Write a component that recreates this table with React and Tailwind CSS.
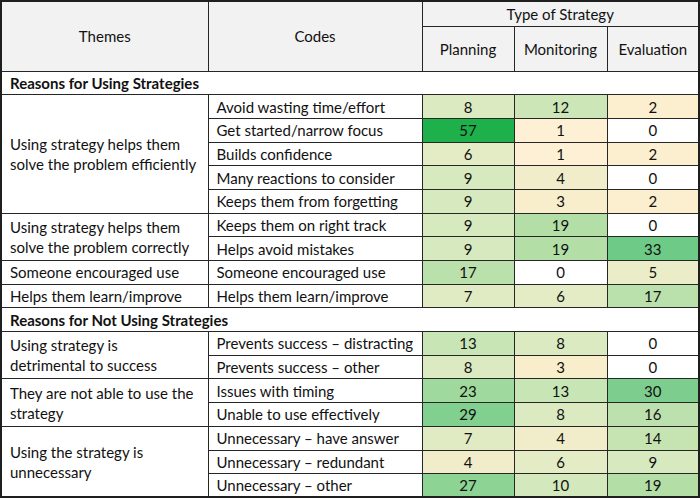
import React from 'react';

const stops = [
  [1, [253, 240, 212]],
  [3, [248, 238, 204]],
  [6, [228, 236, 198]],
  [10, [211, 232, 188]],
  [20, [175, 221, 164]],
  [33, [110, 202, 135]],
  [57, [30, 176, 75]],
];

const heat = (v) => {
  if (v === 0) return '#ffffff';
  for (let i = 0; i < stops.length - 1; i++) {
    const [a, ca] = stops[i];
    const [b, cb] = stops[i + 1];
    if (v >= a && v <= b) {
      const t = (v - a) / (b - a);
      const c = ca.map((x, k) => Math.round(x + (cb[k] - x) * t));
      return `rgb(${c.join(',')})`;
    }
  }
  return '#ffffff';
};

const rows = [
  { section: 'Reasons for Using Strategies' },
  { theme: ['Using strategy helps them', 'solve the problem efficiently'], span: 5, code: 'Avoid wasting time/effort', v: [8, 12, 2] },
  { code: 'Get started/narrow focus', v: [57, 1, 0] },
  { code: 'Builds confidence', v: [6, 1, 2] },
  { code: 'Many reactions to consider', v: [9, 4, 0] },
  { code: 'Keeps them from forgetting', v: [9, 3, 2] },
  { theme: ['Using strategy helps them', 'solve the problem correctly'], span: 2, code: 'Keeps them on right track', v: [9, 19, 0] },
  { code: 'Helps avoid mistakes', v: [9, 19, 33] },
  { theme: ['Someone encouraged use'], span: 1, code: 'Someone encouraged use', v: [17, 0, 5] },
  { theme: ['Helps them learn/improve'], span: 1, code: 'Helps them learn/improve', v: [7, 6, 17] },
  { section: 'Reasons for Not Using Strategies' },
  { theme: ['Using strategy is', 'detrimental to success'], span: 2, code: 'Prevents success – distracting', v: [13, 8, 0] },
  { code: 'Prevents success – other', v: [8, 3, 0] },
  { theme: ['They are not able to use the', 'strategy'], span: 2, code: 'Issues with timing', v: [23, 13, 30] },
  { code: 'Unable to use effectively', v: [29, 8, 16] },
  { theme: ['Using the strategy is', 'unnecessary'], span: 3, code: 'Unnecessary – have answer', v: [7, 4, 14] },
  { code: 'Unnecessary – redundant', v: [4, 6, 9] },
  { code: 'Unnecessary – other', v: [27, 10, 19] },
];

const cell = 'border border-[#262626]';

export default function App() {
  return (
    <div className="w-[700px] h-[499px] bg-white">
      <table
        className="w-[698px] table-fixed border-collapse border-2 border-[#1f1f1f] text-[15px] leading-[20px] text-[#111]"
        style={{ fontFamily: 'Lato, "Liberation Sans", sans-serif' }}
      >
        <colgroup>
          <col className="w-[207px]" />
          <col className="w-[214px]" />
          <col className="w-[92px]" />
          <col className="w-[93px]" />
          <col className="w-[92px]" />
        </colgroup>
        <thead>
          <tr className="h-[25px] bg-[#f2f2f2]">
            <th rowSpan={2} className={`${cell} font-normal text-center`}>Themes</th>
            <th rowSpan={2} className={`${cell} font-normal text-center`}>Codes</th>
            <th colSpan={3} className={`${cell} font-normal text-center`}>Type of Strategy</th>
          </tr>
          <tr className="h-[45px] bg-[#f2f2f2]">
            <th className={`${cell} font-normal text-center`}>Planning</th>
            <th className={`${cell} font-normal text-center`}>Monitoring</th>
            <th className={`${cell} font-normal text-center`}>Evaluation</th>
          </tr>
        </thead>
        <tbody>
          {rows.map((r, i) =>
            r.section ? (
              <tr key={i} className="h-[23.7px]">
                <td colSpan={5} className={`${cell} px-2 font-bold`}>{r.section}</td>
              </tr>
            ) : (
              <tr key={i} className="h-[23.7px]">
                {r.theme && (
                  <td rowSpan={r.span} className={`${cell} px-2 align-middle`}>
                    {r.theme.map((t, k) => (
                      <div key={k}>{t}</div>
                    ))}
                  </td>
                )}
                <td className={`${cell} px-2 whitespace-nowrap`}>{r.code}</td>
                {r.v.map((v, k) => (
                  <td key={k} className={`${cell} text-center`} style={{ backgroundColor: heat(v) }}>
                    {v}
                  </td>
                ))}
              </tr>
            )
          )}
        </tbody>
      </table>
    </div>
  );
}
